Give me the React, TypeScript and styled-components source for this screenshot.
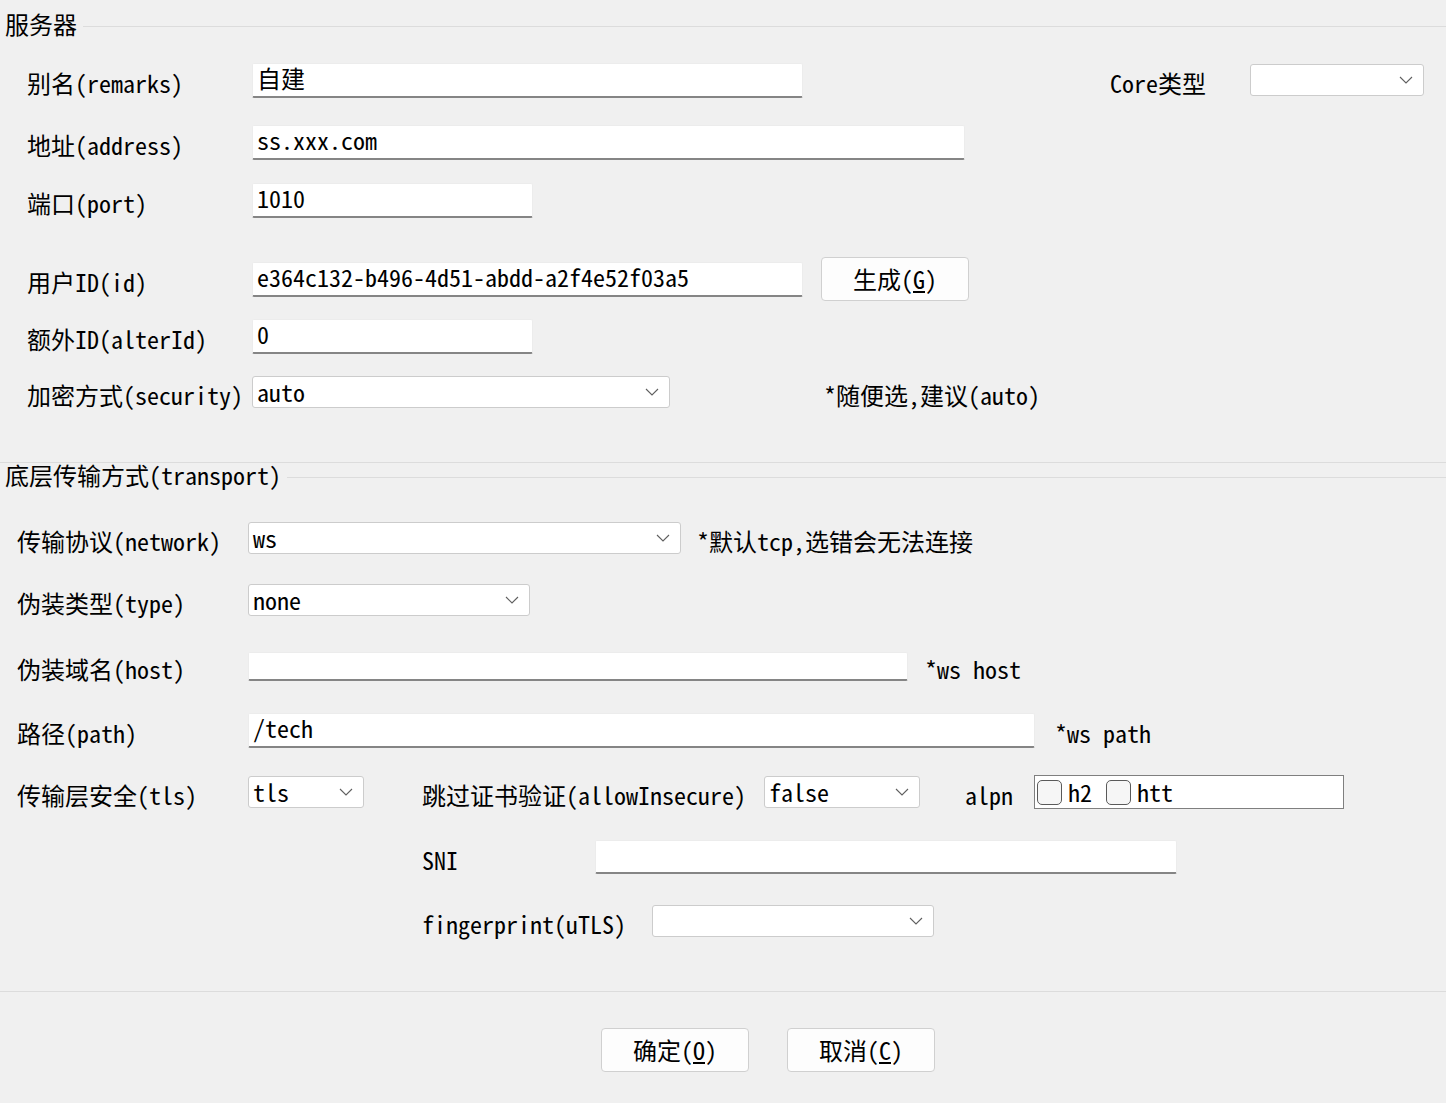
import React from "react";
import styled, { createGlobalStyle } from "styled-components";

const GlobalStyle = createGlobalStyle`
  html, body {
    margin: 0;
    padding: 0;
    background: #f0f0f0;
  }
  body {
    font-family: "Noto Sans Mono CJK SC", "Noto Sans CJK SC", "DejaVu Sans Mono", monospace;
    font-size: 24px;
    color: #000;
    width: 1446px;
    height: 1103px;
    overflow: hidden;
  }
`;

const Page = styled.div`
  display: flex;
  flex-direction: column;
  width: 1446px;
  height: 1103px;
`;

const GroupHeader = styled.div<{ $mt: number }>`
  display: flex;
  align-items: center;
  height: 28px;
  margin-top: ${(p) => p.$mt}px;
  padding-left: 5px;
`;

const GroupTitle = styled.span`
  line-height: 28px;
  margin-bottom: 4px;
  white-space: nowrap;
  padding-right: 6px;
`;

const GroupRule = styled.div`
  flex: 1;
  height: 1px;
  background: #dcdcdc;
`;

const Divider = styled.div<{ $mt: number }>`
  height: 1px;
  background: #dcdcdc;
  margin-top: ${(p) => p.$mt}px;
`;

const Row = styled.div<{ $mt: number; $pl: number }>`
  display: flex;
  align-items: center;
  height: 44px;
  margin-top: ${(p) => p.$mt}px;
  padding-left: ${(p) => p.$pl}px;
`;

const Label = styled.span<{ $w?: number; $ml?: number }>`
  flex: none;
  white-space: nowrap;
  line-height: 28px;
  width: ${(p) => (p.$w ? `${p.$w}px` : "auto")};
  margin-left: ${(p) => p.$ml ?? 0}px;
  margin-top: 6px;
`;

const TextBox = styled.input<{ $w: number; $h: number }>`
  box-sizing: border-box;
  flex: none;
  width: ${(p) => p.$w}px;
  height: ${(p) => p.$h}px;
  margin: 0;
  padding: 0 4px 5px 4px;
  background: #fff;
  border: 1px solid #ececec;
  border-bottom: 2px solid #858585;
  border-radius: 2px;
  font: inherit;
  color: #000;
  outline: none;
`;

const Combo = styled.div<{ $w: number; $h: number; $ml?: number }>`
  box-sizing: border-box;
  flex: none;
  display: flex;
  align-items: center;
  justify-content: space-between;
  width: ${(p) => p.$w}px;
  height: ${(p) => p.$h}px;
  margin-left: ${(p) => p.$ml ?? 0}px;
  padding: 0 10px 0 4px;
  background: #fff;
  border: 1px solid #cccccc;
  border-radius: 3px;
`;

const ComboValue = styled.span`
  white-space: nowrap;
  line-height: 28px;
`;

const Chevron = () => (
  <svg width="14" height="8" viewBox="0 0 14 8" fill="none">
    <polyline points="1,1 7,7 13,1" stroke="#5f5f5f" strokeWidth="1.1" />
  </svg>
);

const Button = styled.div<{ $w: number; $ml?: number }>`
  box-sizing: border-box;
  flex: none;
  display: flex;
  align-items: center;
  justify-content: center;
  width: ${(p) => p.$w}px;
  height: 44px;
  margin-left: ${(p) => p.$ml ?? 0}px;
  background: #fdfdfd;
  border: 1px solid #d0d0d0;
  border-radius: 4px;
  line-height: 28px;
  white-space: nowrap;
`;

const Note = styled.span<{ $ml: number }>`
  flex: none;
  white-space: nowrap;
  line-height: 28px;
  margin-left: ${(p) => p.$ml}px;
  margin-top: 6px;
`;

const AlpnBox = styled.div`
  box-sizing: border-box;
  flex: none;
  display: flex;
  align-items: center;
  width: 310px;
  height: 34px;
  margin-left: 21px;
  padding-left: 2px;
  background: #fff;
  border: 1px solid #7f7f7f;
`;

const CheckBox = styled.span<{ $ml?: number }>`
  box-sizing: border-box;
  flex: none;
  width: 25px;
  height: 25px;
  margin-left: ${(p) => p.$ml ?? 0}px;
  border: 1.5px solid #5a5a5a;
  border-radius: 5px;
  background: #f6f6f6;
`;

const CheckText = styled.span`
  margin-left: 6px;
  white-space: nowrap;
  line-height: 26px;
`;

const ButtonBar = styled.div`
  display: flex;
  align-items: center;
  margin-top: 36px;
  padding-left: 601px;
`;

export default function App() {
  return (
    <>
      <GlobalStyle />
      <Page>
        <GroupHeader $mt={12}>
          <GroupTitle>服务器</GroupTitle>
          <GroupRule />
        </GroupHeader>

        <Row $mt={18} $pl={27}>
          <Label $w={225}>别名(remarks)</Label>
          <TextBox $w={551} $h={35} readOnly value="自建" />
          <Label $ml={307}>Core类型</Label>
          <Combo $w={174} $h={32} $ml={44}>
            <ComboValue />
            <Chevron />
          </Combo>
        </Row>

        <Row $mt={18} $pl={27}>
          <Label $w={225}>地址(address)</Label>
          <TextBox $w={713} $h={35} readOnly value="ss.xxx.com" />
        </Row>

        <Row $mt={14} $pl={27}>
          <Label $w={225}>端口(port)</Label>
          <TextBox $w={281} $h={35} readOnly value="1010" />
        </Row>

        <Row $mt={35} $pl={27}>
          <Label $w={225}>用户ID(id)</Label>
          <TextBox $w={551} $h={35} readOnly value="e364c132-b496-4d51-abdd-a2f4e52f03a5" />
          <Button $w={148} $ml={18}>
            生成(<u>G</u>)
          </Button>
        </Row>

        <Row $mt={13} $pl={27}>
          <Label $w={225}>额外ID(alterId)</Label>
          <TextBox $w={281} $h={35} readOnly value="0" />
        </Row>

        <Row $mt={12} $pl={27}>
          <Label $w={225}>加密方式(security)</Label>
          <Combo $w={418} $h={32}>
            <ComboValue>auto</ComboValue>
            <Chevron />
          </Combo>
          <Note $ml={154}>*随便选,建议(auto)</Note>
        </Row>

        <Divider $mt={48} />

        <GroupHeader $mt={0}>
          <GroupTitle>底层传输方式(transport)</GroupTitle>
          <GroupRule />
        </GroupHeader>

        <Row $mt={25} $pl={17}>
          <Label $w={231}>传输协议(network)</Label>
          <Combo $w={433} $h={32}>
            <ComboValue>ws</ComboValue>
            <Chevron />
          </Combo>
          <Note $ml={16}>*默认tcp,选错会无法连接</Note>
        </Row>

        <Row $mt={18} $pl={17}>
          <Label $w={231}>伪装类型(type)</Label>
          <Combo $w={282} $h={32}>
            <ComboValue>none</ComboValue>
            <Chevron />
          </Combo>
        </Row>

        <Row $mt={22} $pl={17}>
          <Label $w={231}>伪装域名(host)</Label>
          <TextBox $w={660} $h={29} readOnly value="" />
          <Note $ml={17}>*ws host</Note>
        </Row>

        <Row $mt={20} $pl={17}>
          <Label $w={231}>路径(path)</Label>
          <TextBox $w={787} $h={35} readOnly value="/tech" />
          <Note $ml={20}>*ws path</Note>
        </Row>

        <Row $mt={18} $pl={17}>
          <Label $w={231}>传输层安全(tls)</Label>
          <Combo $w={116} $h={32}>
            <ComboValue>tls</ComboValue>
            <Chevron />
          </Combo>
          <Label $ml={58}>跳过证书验证(allowInsecure)</Label>
          <Combo $w={156} $h={32} $ml={18}>
            <ComboValue>false</ComboValue>
            <Chevron />
          </Combo>
          <Label $ml={45}>alpn</Label>
          <AlpnBox>
            <CheckBox />
            <CheckText>h2</CheckText>
            <CheckBox $ml={14} />
            <CheckText>htt</CheckText>
          </AlpnBox>
        </Row>

        <Row $mt={21} $pl={422}>
          <Label $w={173}>SNI</Label>
          <TextBox $w={582} $h={34} readOnly value="" />
        </Row>

        <Row $mt={20} $pl={422}>
          <Label $w={230}>fingerprint(uTLS)</Label>
          <Combo $w={282} $h={32}>
            <ComboValue />
            <Chevron />
          </Combo>
        </Row>

        <Divider $mt={48} />

        <ButtonBar>
          <Button $w={148}>
            确定(<u>O</u>)
          </Button>
          <Button $w={148} $ml={38}>
            取消(<u>C</u>)
          </Button>
        </ButtonBar>
      </Page>
    </>
  );
}
